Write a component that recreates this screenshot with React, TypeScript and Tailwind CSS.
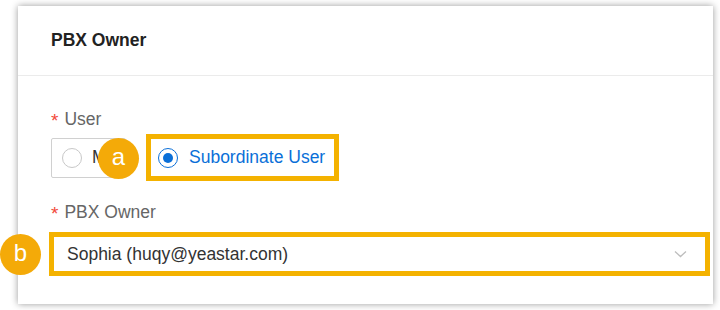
const font = { fontFamily: '"Liberation Sans", Arial, sans-serif' };

const Badge = ({ letter, className }: { letter: string; className: string }) => (
  <div
    className={`absolute flex h-[41px] w-[41px] items-center justify-center rounded-full bg-[#f4aa08] text-[24px] leading-none text-white ${className}`}
  >
    <span className="-mt-[3px]">{letter}</span>
  </div>
);

const Label = ({ text }: { text: string }) => (
  <div className="flex h-[20px] items-center text-[17.5px] leading-[20px] text-[#666]">
    <span className="mr-[6px] mt-[4px] text-[19px] text-[#f2483a]">*</span>
    {text}
  </div>
);

export default function App() {
  return (
    <div className="h-[310px] w-[720px] bg-white pl-[18px] pt-[6px]" style={font}>
      <div className="relative h-[298px] w-[695px] bg-white shadow-[0_0_7px_rgba(0,0,0,0.4)]">
        <div className="flex h-[70px] items-center border-b border-[#ebebeb] pl-[33px]">
          <h3 className="text-[17.5px] font-bold text-[#222]">PBX Owner</h3>
        </div>

        <div className="pl-[33px] pt-[33px]">
          <Label text="User" />

          <div className="mt-[5px] flex items-center">
            <div className="flex h-[40px] w-[75px] items-center rounded-[2px] border border-[#d0d0d0] pl-[10px]">
              <span className="h-[20px] w-[20px] rounded-full border border-[#c8c8c8]" />
              <span className="ml-[10px] text-[17.5px] text-[#333]">Me</span>
            </div>

            <div className="ml-[20px] flex h-[47px] w-[193px] items-center border-[5px] border-[#f4b200] pl-[7px]">
              <span className="flex h-[20px] w-[20px] items-center justify-center rounded-full border border-[#0a6fd8]">
                <span className="h-[10px] w-[10px] rounded-full bg-[#0a6fd8]" />
              </span>
              <span className="ml-[11px] text-[17.5px] text-[#0a6fd8]">Subordinate User</span>
            </div>
          </div>

          <div className="mt-[21px]">
            <Label text="PBX Owner" />
          </div>

          <div className="-ml-[2px] mt-[10px] flex h-[44px] w-[661px] items-center justify-between border-[5px] border-[#f4b200] pl-[13px] pr-[18px]">
            <span className="text-[17.5px] text-[#333]">Sophia (huqy@yeastar.com)</span>
            <svg width="13" height="8" viewBox="0 0 13 8" fill="none">
              <path d="M1 1.5 L6.5 6.5 L12 1.5" stroke="#bdbdbd" strokeWidth="1.3" />
            </svg>
          </div>
        </div>

        <Badge letter="a" className="left-[80px] top-[132px]" />
        <Badge letter="b" className="-left-[18px] top-[228px]" />
      </div>
    </div>
  );
}
